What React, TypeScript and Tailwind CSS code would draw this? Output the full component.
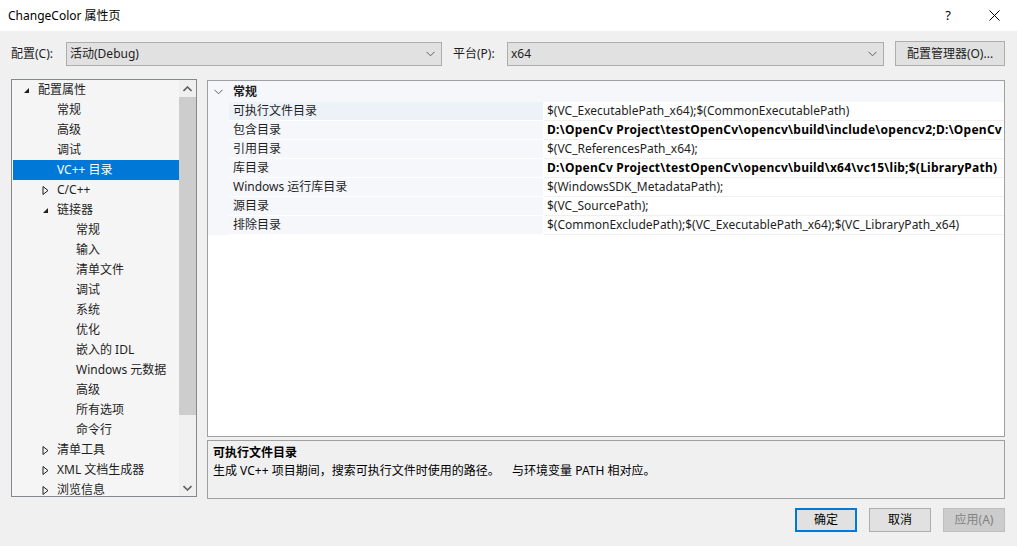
import React from "react";

const Chevron = ({ className = "" }: { className?: string }) => (
  <svg width="9" height="6" viewBox="0 0 9 6" className={className}>
    <polyline points="0.5,0.8 4.5,4.8 8.5,0.8" fill="none" stroke="#606060" strokeWidth="1" />
  </svg>
);

const ChevronUp = () => (
  <svg width="9" height="6" viewBox="0 0 9 6">
    <polyline points="0.5,5 4.5,1 8.5,5" fill="none" stroke="#606060" strokeWidth="1.6" />
  </svg>
);
const ChevronDown = () => (
  <svg width="9" height="6" viewBox="0 0 9 6">
    <polyline points="0.5,1 4.5,5 8.5,1" fill="none" stroke="#606060" strokeWidth="1.6" />
  </svg>
);

const Expanded = () => (
  <svg width="7" height="7" viewBox="0 0 7 7">
    <polygon points="6,1 6,6 1,6" fill="#1e1e1e" />
  </svg>
);
const Collapsed = () => (
  <svg width="7" height="9" viewBox="0 0 7 9">
    <polygon points="1,0.5 6,4.5 1,8.5" fill="none" stroke="#1e1e1e" strokeWidth="1" />
  </svg>
);

type TreeItem = { label: string; level: number; icon?: "exp" | "col"; selected?: boolean };

const tree: TreeItem[] = [
  { label: "配置属性", level: 0, icon: "exp" },
  { label: "常规", level: 1 },
  { label: "高级", level: 1 },
  { label: "调试", level: 1 },
  { label: "VC++ 目录", level: 1, selected: true },
  { label: "C/C++", level: 1, icon: "col" },
  { label: "链接器", level: 1, icon: "exp" },
  { label: "常规", level: 2 },
  { label: "输入", level: 2 },
  { label: "清单文件", level: 2 },
  { label: "调试", level: 2 },
  { label: "系统", level: 2 },
  { label: "优化", level: 2 },
  { label: "嵌入的 IDL", level: 2 },
  { label: "Windows 元数据", level: 2 },
  { label: "高级", level: 2 },
  { label: "所有选项", level: 2 },
  { label: "命令行", level: 2 },
  { label: "清单工具", level: 1, icon: "col" },
  { label: "XML 文档生成器", level: 1, icon: "col" },
  { label: "浏览信息", level: 1, icon: "col" },
];

const props: { name: string; value: string; bold?: boolean }[] = [
  { name: "可执行文件目录", value: "$(VC_ExecutablePath_x64);$(CommonExecutablePath)" },
  { name: "包含目录", value: "D:\\OpenCv Project\\testOpenCv\\opencv\\build\\include\\opencv2;D:\\OpenCv Project\\testOpenCv\\opencv\\build\\include;$(IncludePath)", bold: true },
  { name: "引用目录", value: "$(VC_ReferencesPath_x64);" },
  { name: "库目录", value: "D:\\OpenCv Project\\testOpenCv\\opencv\\build\\x64\\vc15\\lib;$(LibraryPath)", bold: true },
  { name: "Windows 运行库目录", value: "$(WindowsSDK_MetadataPath);" },
  { name: "源目录", value: "$(VC_SourcePath);" },
  { name: "排除目录", value: "$(CommonExcludePath);$(VC_ExecutablePath_x64);$(VC_LibraryPath_x64)" },
];

const indent = ["pl-[10px]", "pl-[29px]", "pl-[48px]"];

export default function App() {
  return (
    <div className="w-[1017px] h-[546px] bg-[#f0f0f0] text-[12px] text-[#1e1e1e] font-['Noto_Sans','Noto_Sans_CJK_SC',sans-serif] overflow-hidden flex flex-col select-none">
      {/* Title bar */}
      <div className="h-[31px] bg-white flex items-center pl-[8px] shrink-0">
        <span className="text-[12px] text-black">ChangeColor 属性页</span>
        <div className="ml-auto flex items-center h-full">
          <span className="w-[46px] text-center text-[13px] text-black">?</span>
          <div className="w-[46px] flex justify-center">
            <svg width="11" height="11" viewBox="0 0 11 11">
              <line x1="0.5" y1="0.5" x2="10.5" y2="10.5" stroke="#000" strokeWidth="1" />
              <line x1="10.5" y1="0.5" x2="0.5" y2="10.5" stroke="#000" strokeWidth="1" />
            </svg>
          </div>
        </div>
      </div>

      {/* Config row */}
      <div className="flex items-center h-[25px] mt-[10px] pl-[11px] pr-[12px] shrink-0">
        <span className="w-[55px]">配置(C):</span>
        <div className="w-[376px] h-[24px] bg-[#e1e1e1] border border-[#adadad] flex items-center pl-[3px] pr-[6px]">
          <span>活动(Debug)</span>
          <Chevron className="ml-auto" />
        </div>
        <span className="ml-[11px] w-[54px]">平台(P):</span>
        <div className="w-[377px] h-[24px] bg-[#e1e1e1] border border-[#adadad] flex items-center pl-[3px] pr-[6px]">
          <span>x64</span>
          <Chevron className="ml-auto" />
        </div>
        <div className="ml-auto w-[110px] h-[25px] bg-[#e1e1e1] border border-[#adadad] flex items-center justify-center">
          配置管理器(O)...
        </div>
      </div>

      {/* Main */}
      <div className="flex mt-[13px] pl-[11px] pr-[12px] h-[420px] shrink-0">
        {/* Tree */}
        <div className="w-[186px] shrink-0 h-[418px] border border-[#828790] bg-[#f5f5f5] flex">
          <div className="flex-1 min-w-0 pl-[1px]">
            {tree.map((t, i) => (
              <div
                key={i}
                className={`h-[20px] flex items-center whitespace-nowrap ${indent[t.level]} ${t.selected ? "bg-[#0078d7] text-white" : ""}`}
              >
                <span className="w-[15px] shrink-0 flex items-center">
                  {t.icon === "exp" ? <Expanded /> : t.icon === "col" ? <Collapsed /> : null}
                </span>
                <span>{t.label}</span>
              </div>
            ))}
          </div>
          <div className="w-[17px] shrink-0 bg-[#f0f0f0] flex flex-col items-center">
            <div className="h-[17px] flex items-center justify-center">
              <ChevronUp />
            </div>
            <div className="w-[17px] h-[318px] bg-[#cdcdcd]" />
            <div className="flex-1" />
            <div className="h-[17px] flex items-center justify-center">
              <ChevronDown />
            </div>
          </div>
        </div>

        {/* Right column */}
        <div className="ml-[10px] mt-[1px] flex-1 min-w-0 flex flex-col">
          <div className="h-[358px] border border-[#a0a0a0] bg-white overflow-hidden">
            <div className="h-[21px] bg-[#f5f7fb] flex items-center">
              <span className="w-[21px] flex justify-center">
                <Chevron />
              </span>
              <span className="pl-[4px] font-bold">常规</span>
            </div>
            {props.map((p, i) => (
              <div key={i} className="h-[19px] flex">
                <div className="w-[21px] shrink-0 bg-[#f5f7fb]" />
                <div
                  className={`w-[315px] shrink-0 border-b border-r border-white flex items-center pl-[4px] whitespace-nowrap ${i === 0 ? "bg-[#edf2f9]" : "bg-[#f5f7fb]"}`}
                >
                  {p.name}
                </div>
                <div className="flex-1 min-w-0 border-b border-[#f0f0f0] flex items-center pl-[3px] overflow-hidden whitespace-nowrap">
                  <span className={p.bold ? "font-bold text-black tracking-[0.25px]" : ""}>{p.value}</span>
                </div>
              </div>
            ))}
          </div>
          <div className="mt-[3px] h-[59px] border border-[#a0a0a0] bg-[#f0f0f0] px-[5px] pt-[3px]">
            <div className="font-bold text-black leading-[18px]">可执行文件目录</div>
            <div className="leading-[18px] text-black whitespace-pre">生成 VC++ 项目期间，搜索可执行文件时使用的路径。    与环境变量 PATH 相对应。</div>
          </div>
        </div>
      </div>

      {/* Buttons */}
      <div className="flex justify-end gap-[12px] pr-[12px] mt-[9px] shrink-0">
        <div className="w-[62px] h-[24px] bg-[#e1e1e1] border-2 border-[#0078d7] flex items-center justify-center text-black">确定</div>
        <div className="w-[62px] h-[24px] bg-[#e1e1e1] border border-[#adadad] flex items-center justify-center text-black">取消</div>
        <div className="w-[62px] h-[24px] bg-[#cccccc] border border-[#bfbfbf] flex items-center justify-center text-[#838383]">应用(A)</div>
      </div>
    </div>
  );
}
